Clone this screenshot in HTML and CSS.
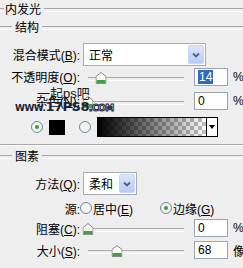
FILE: index.html
```html
<!DOCTYPE html>
<html lang="zh-CN">

<head>
    <meta charset="UTF-8">
    <meta name="viewport" content="width=device-width, initial-scale=1.0">
    <title>内发光</title>
    <link rel="stylesheet" href="styles.css">
</head>

<body>
    <div class="panel">
        <div class="group-title top"><span class="legend">内发光</span></div>
        <div class="group-title sub"><span class="legend">结构</span></div>

        <!-- blend mode -->
        <div class="row blend">
            <span class="lbl">混合模式(<u>B</u>):</span>
            <div class="select wide">
                <span class="sel-text">正常</span>
                <span class="sel-btn"><svg width="8" height="6" viewBox="0 0 8 6"><path d="M1 1.5 L4 4.5 L7 1.5" fill="none" stroke="#4d6185" stroke-width="1.8"/></svg></span>
            </div>
        </div>

        <div class="row opacity">
            <span class="lbl">不透明度(<u>O</u>):</span>
            <div class="slider">
                <span class="thumb" style="left: 15px"><svg width="11" height="12" viewBox="0 0 11 12"><path d="M0.5 4.5 L5.5 0.5 L10.5 4.5 V11.5 H0.5 Z" fill="#fbfbf4" stroke="#8a8a8a"/><rect x="1" y="8" width="9" height="3" fill="#3fa33f"/></svg></span>
            </div>
            <div class="field"><span class="selected">14</span></div>
            <span class="unit">%</span>
        </div>

        <div class="row noise">
            <span class="lbl">杂色(<u>N</u>):</span>
            <div class="slider">
                <span class="thumb" style="left: 2px"><svg width="11" height="12" viewBox="0 0 11 12"><path d="M0.5 4.5 L5.5 0.5 L10.5 4.5 V11.5 H0.5 Z" fill="#fbfbf4" stroke="#8a8a8a"/><rect x="1" y="8" width="9" height="3" fill="#3fa33f"/></svg></span>
            </div>
            <div class="field">0</div>
            <span class="unit">%</span>
        </div>

        <!-- colour / gradient choice -->
        <div class="row swatches">
            <span class="radio first"><svg width="12" height="12" viewBox="0 0 12 12"><circle cx="6" cy="6" r="5.5" fill="#f3f3ee" stroke="#6d87a3"/><circle cx="6" cy="6" r="2" fill="#2ba52b"/></svg></span>
            <span class="swatch"></span>
            <span class="radio second"><svg width="12" height="12" viewBox="0 0 12 12"><circle cx="6" cy="6" r="5.5" fill="#f3f3ee" stroke="#6d87a3"/></svg></span>
            <div class="grad">
                <span class="grad-fill"></span>
                <span class="grad-btn"><span class="tri"></span></span>
            </div>
        </div>

        <div class="sep"></div>

        <div class="group-title sub pixels"><span class="legend">图素</span></div>

        <div class="row method">
            <span class="lbl">方法(<u>Q</u>):</span>
            <div class="select narrow">
                <span class="sel-text">柔和</span>
                <span class="sel-btn"><svg width="8" height="6" viewBox="0 0 8 6"><path d="M1 1.5 L4 4.5 L7 1.5" fill="none" stroke="#4d6185" stroke-width="1.8"/></svg></span>
            </div>
        </div>

        <div class="row source">
            <span class="lbl">源:</span>
            <span class="opt opt-first">
                <span class="radio"><svg width="12" height="12" viewBox="0 0 12 12"><circle cx="6" cy="6" r="5.5" fill="#f3f3ee" stroke="#6d87a3"/></svg></span>
                <span class="opt-text">居中(<u>E</u>)</span>
            </span>
            <span class="opt">
                <span class="radio"><svg width="12" height="12" viewBox="0 0 12 12"><circle cx="6" cy="6" r="5.5" fill="#f3f3ee" stroke="#6d87a3"/><circle cx="6" cy="6" r="2" fill="#2ba52b"/></svg></span>
                <span class="opt-text">边缘(<u>G</u>)</span>
            </span>
        </div>

        <div class="row choke">
            <span class="lbl">阻塞(<u>C</u>):</span>
            <div class="slider">
                <span class="thumb" style="left: 2px"><svg width="11" height="12" viewBox="0 0 11 12"><path d="M0.5 4.5 L5.5 0.5 L10.5 4.5 V11.5 H0.5 Z" fill="#fbfbf4" stroke="#8a8a8a"/><rect x="1" y="8" width="9" height="3" fill="#3fa33f"/></svg></span>
            </div>
            <div class="field">0</div>
            <span class="unit">%</span>
        </div>

        <div class="row size">
            <span class="lbl">大小(<u>S</u>):</span>
            <div class="slider">
                <span class="thumb" style="left: 31px"><svg width="11" height="12" viewBox="0 0 11 12"><path d="M0.5 4.5 L5.5 0.5 L10.5 4.5 V11.5 H0.5 Z" fill="#fbfbf4" stroke="#8a8a8a"/><rect x="1" y="8" width="9" height="3" fill="#3fa33f"/></svg></span>
            </div>
            <div class="field">68</div>
            <span class="unit">像素</span>
        </div>

        <!-- site watermark over the dialog -->
        <div class="wm-cn">一起ps吧</div>
        <div class="wm-url"><span class="wm-www">WWW.</span><span class="wm-num">17PS8</span><span class="wm-com">.COM</span></div>
    </div>
</body>

</html>
```

FILE: styles.css
```css
* {
    box-sizing: border-box;
}

body {
    margin: 0;
    background-color: #eeeeee;
    font-family: "Liberation Sans", "Noto Sans CJK SC", sans-serif;
    font-size: 12px;
    color: #000;
    overflow: hidden;
}

.panel {
    position: relative;
    width: 243px;
    height: 268px;
    overflow: hidden;
}

/* Group box titles */
.group-title {
    display: flex;
    align-items: center;
}

.group-title::before,
.group-title::after {
    content: "";
    height: 2px;
    border-top: 1px solid #a7a7a7;
    border-bottom: 1px solid #fff;
}

.group-title::before {
    width: 4px;
}

.group-title::after {
    flex: 1;
}

.legend {
    padding: 0 3px 0 1px;
    line-height: 14px;
}

.top {
    height: 20px;
}

.sub {
    height: 16px;
}

.sub::before {
    width: 12px;
}

.sub .legend {
    padding: 0 3px;
}

.pixels {
    margin-top: 3px;
}

/* Rows */
.row {
    display: flex;
    align-items: center;
    white-space: nowrap;
}

.lbl {
    width: 80px;
    flex-shrink: 0;
    text-align: right;
}

.blend {
    margin-top: 7px;
    height: 23px;
}

.opacity {
    margin-top: 1px;
    height: 19px;
}

.noise {
    margin-top: 5px;
    height: 19px;
}

.swatches {
    margin-top: 7px;
    height: 20px;
}

.method {
    margin-top: 7px;
    height: 23px;
}

.source {
    margin-top: 4px;
    height: 18px;
}

.choke {
    margin-top: 2px;
    height: 18px;
}

.size {
    margin-top: 4px;
    height: 18px;
}

/* Dropdowns */
.select {
    display: flex;
    margin-left: 3px;
    height: 23px;
    padding: 1px;
    background-color: #fff;
    border: 1px solid #a5acb2;
}

.wide {
    width: 123px;
}

.narrow {
    width: 54px;
}

.sel-text {
    flex: 1;
    display: flex;
    align-items: center;
    padding-left: 4px;
}

.sel-btn {
    width: 16px;
    display: flex;
    align-items: center;
    justify-content: center;
    background: linear-gradient(#dbe5fc, #b9cbf4);
    border: 1px solid #c6d5fa;
    border-radius: 2px;
}

/* Sliders */
.slider {
    position: relative;
    width: 98px;
    height: 12px;
    margin-left: 6px;
    flex-shrink: 0;
}

.slider::before {
    content: "";
    position: absolute;
    left: 2px;
    right: 0;
    top: 6px;
    height: 2px;
    border-top: 1px solid #a9a9a9;
    border-bottom: 1px solid #fff;
}

.thumb {
    position: absolute;
    top: 1px;
    transform: translateX(-50%);
    line-height: 0;
}

/* Number fields */
.field {
    display: flex;
    align-items: center;
    width: 34px;
    height: 18px;
    margin-left: 10px;
    padding-left: 3px;
    background-color: #fff;
    border: 1px solid #9aa5b4;
    flex-shrink: 0;
}

.selected {
    background-color: #316ac5;
    color: #fff;
    padding: 0 1px;
}

.unit {
    margin-left: 5px;
}

/* Radios and swatches */
.radio {
    display: flex;
    line-height: 0;
}

.first {
    margin-left: 31px;
}

.swatch {
    width: 16px;
    height: 15px;
    margin-left: 6px;
    background-color: #000;
}

.second {
    margin-left: 14px;
}

.grad {
    display: flex;
    width: 121px;
    height: 20px;
    margin-left: 6px;
    border: 1px solid #000;
}

.grad-fill {
    flex: 1;
    background:
        linear-gradient(to right, #000, rgba(0, 0, 0, 0)),
        repeating-conic-gradient(#bdbdbd 0 25%, #fff 0 50%) 0 0 / 8px 8px;
}

.grad-btn {
    width: 11px;
    display: flex;
    align-items: center;
    justify-content: center;
    border-left: 1px solid #000;
    background-color: #fff;
}

.tri {
    width: 0;
    height: 0;
    border-left: 3px solid transparent;
    border-right: 3px solid transparent;
    border-top: 4px solid #000;
}

.sep {
    margin-top: 7px;
    height: 2px;
    border-top: 1px solid #a7a7a7;
    border-bottom: 1px solid #fff;
}

.opt {
    display: flex;
    align-items: center;
}

.opt-first {
    width: 80px;
}

.opt-text {
    margin-left: 1px;
}

/* Watermark */
.wm-cn {
    position: absolute;
    left: 37px;
    top: 83px;
    font-size: 13px;
    color: #1a1a1a;
}

.wm-url {
    position: absolute;
    left: 15px;
    top: 99px;
    font-family: "DejaVu Sans", sans-serif;
    font-weight: bold;
    color: #1d2236;
    white-space: nowrap;
    letter-spacing: -0.5px;
}

.wm-www {
    font-size: 9px;
}

.wm-num {
    font-size: 13px;
}

.wm-com {
    font-size: 9px;
    color: #eeeeee;
    -webkit-text-stroke: 1px #1d2236;
}
```
